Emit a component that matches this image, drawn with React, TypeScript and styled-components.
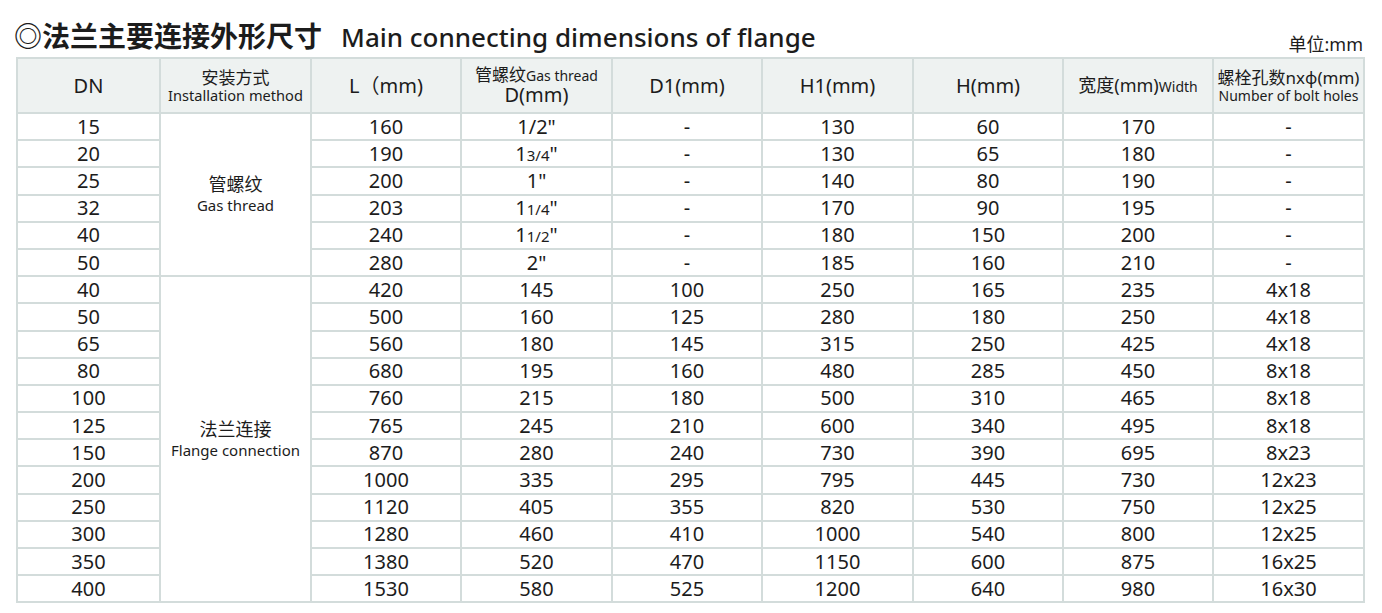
import React from 'react';
import styled, { createGlobalStyle } from 'styled-components';

const GlobalStyle = createGlobalStyle`
  html, body {
    margin: 0;
    padding: 0;
    background: #ffffff;
  }
  body {
    font-family: "Noto Sans", "Noto Sans CJK SC", sans-serif;
    color: #1c1c1c;
  }
`;

const Page = styled.div`
  width: 1382px;
  height: 613px;
  padding: 0 0 0 16px;
  box-sizing: border-box;
  overflow: hidden;
`;

const TitleBar = styled.div`
  width: 1347px;
  height: 57px;
  display: flex;
  align-items: flex-end;
  justify-content: space-between;
`;

const Title = styled.h1`
  margin: 0 0 7px -2px;
  display: flex;
  align-items: baseline;
  gap: 19px;
  line-height: 1;
  font-weight: 400;
`;

const TitleCn = styled.span`
  font-family: "Noto Sans CJK SC", sans-serif;
  font-size: 28px;
  font-weight: 700;
`;

const TitleEn = styled.span`
  font-family: "Noto Sans", sans-serif;
  font-size: 26px;
  font-weight: 500;
`;

const Unit = styled.span`
  font-family: "Noto Sans", "Noto Sans CJK SC", sans-serif;
  font-size: 18px;
  margin-bottom: 1px;
`;

const Table = styled.table`
  border-collapse: collapse;
  table-layout: fixed;
  width: 1347px;
  border: 2px solid #d3dcdb;
`;

const HeadCell = styled.th`
  background: #eef2f1;
  border: 2px solid #d3dcdb;
  height: 53px;
  padding: 0;
  font-weight: 400;
  text-align: center;
  vertical-align: middle;
  line-height: 1.1;
`;

const Cell = styled.td`
  border: 2px solid #d3dcdb;
  height: 25.2px;
  padding: 0;
  text-align: center;
  vertical-align: middle;
  font-size: 20px;
  line-height: 1;
`;

const Big = styled.span`
  font-size: 20px;
`;

const Cn = styled.span<{ $size?: number }>`
  font-family: "Noto Sans CJK SC", sans-serif;
  font-size: ${(p) => p.$size ?? 17}px;
`;

const Small = styled.span<{ $size?: number }>`
  display: block;
  font-size: ${(p) => p.$size ?? 14}px;
`;

const Inline = styled.span<{ $size?: number }>`
  font-size: ${(p) => p.$size ?? 14}px;
`;

const Frac = styled.span`
  font-size: 15px;
`;

const MethodCn = styled.div`
  font-family: "Noto Sans CJK SC", sans-serif;
  font-size: 18px;
  line-height: 1.2;
`;

const MethodEn = styled.div`
  font-size: 15px;
  line-height: 1.4;
`;

const widths = [143, 151, 150, 151, 150, 151, 150, 150, 151];

type Row = {
  dn: number;
  l: number;
  d: React.ReactNode;
  d1: string;
  h1: number;
  h: number;
  w: number;
  bolts: string;
};

const inch = (whole: string, frac?: string) => (
  <>
    {whole}
    {frac && <Frac>{frac}</Frac>}"
  </>
);

const rows: Row[] = [
  { dn: 15, l: 160, d: inch('1/2'), d1: '-', h1: 130, h: 60, w: 170, bolts: '-' },
  { dn: 20, l: 190, d: inch('1', '3/4'), d1: '-', h1: 130, h: 65, w: 180, bolts: '-' },
  { dn: 25, l: 200, d: inch('1'), d1: '-', h1: 140, h: 80, w: 190, bolts: '-' },
  { dn: 32, l: 203, d: inch('1', '1/4'), d1: '-', h1: 170, h: 90, w: 195, bolts: '-' },
  { dn: 40, l: 240, d: inch('1', '1/2'), d1: '-', h1: 180, h: 150, w: 200, bolts: '-' },
  { dn: 50, l: 280, d: inch('2'), d1: '-', h1: 185, h: 160, w: 210, bolts: '-' },
  { dn: 40, l: 420, d: 145, d1: '100', h1: 250, h: 165, w: 235, bolts: '4x18' },
  { dn: 50, l: 500, d: 160, d1: '125', h1: 280, h: 180, w: 250, bolts: '4x18' },
  { dn: 65, l: 560, d: 180, d1: '145', h1: 315, h: 250, w: 425, bolts: '4x18' },
  { dn: 80, l: 680, d: 195, d1: '160', h1: 480, h: 285, w: 450, bolts: '8x18' },
  { dn: 100, l: 760, d: 215, d1: '180', h1: 500, h: 310, w: 465, bolts: '8x18' },
  { dn: 125, l: 765, d: 245, d1: '210', h1: 600, h: 340, w: 495, bolts: '8x18' },
  { dn: 150, l: 870, d: 280, d1: '240', h1: 730, h: 390, w: 695, bolts: '8x23' },
  { dn: 200, l: 1000, d: 335, d1: '295', h1: 795, h: 445, w: 730, bolts: '12x23' },
  { dn: 250, l: 1120, d: 405, d1: '355', h1: 820, h: 530, w: 750, bolts: '12x25' },
  { dn: 300, l: 1280, d: 460, d1: '410', h1: 1000, h: 540, w: 800, bolts: '12x25' },
  { dn: 350, l: 1380, d: 520, d1: '470', h1: 1150, h: 600, w: 875, bolts: '16x25' },
  { dn: 400, l: 1530, d: 580, d1: '525', h1: 1200, h: 640, w: 980, bolts: '16x30' },
];

const methodCell = (i: number) => {
  if (i === 0)
    return (
      <Cell rowSpan={6}>
        <MethodCn>管螺纹</MethodCn>
        <MethodEn>Gas thread</MethodEn>
      </Cell>
    );
  if (i === 6)
    return (
      <Cell rowSpan={12}>
        <MethodCn>法兰连接</MethodCn>
        <MethodEn>Flange connection</MethodEn>
      </Cell>
    );
  return null;
};

export default function App() {
  return (
    <>
      <GlobalStyle />
      <Page>
        <TitleBar>
          <Title>
            <TitleCn>◎法兰主要连接外形尺寸</TitleCn>
            <TitleEn>Main connecting dimensions of flange</TitleEn>
          </Title>
          <Unit>
            <Cn $size={18}>单位</Cn>:mm
          </Unit>
        </TitleBar>
        <Table>
          <colgroup>
            {widths.map((w, i) => (
              <col key={i} style={{ width: w }} />
            ))}
          </colgroup>
          <thead>
            <tr>
              <HeadCell>
                <Big>DN</Big>
              </HeadCell>
              <HeadCell>
                <Cn $size={17}>安装方式</Cn>
                <Small $size={14.6}>Installation method</Small>
              </HeadCell>
              <HeadCell>
                <Big>
                  L<Cn $size={20}>（</Cn>mm)
                </Big>
              </HeadCell>
              <HeadCell>
                <Cn $size={17}>管螺纹</Cn>
                <Inline $size={14}>Gas thread</Inline>
                <Small $size={20}>D(mm)</Small>
              </HeadCell>
              <HeadCell>
                <Big>D1(mm)</Big>
              </HeadCell>
              <HeadCell>
                <Big>H1(mm)</Big>
              </HeadCell>
              <HeadCell>
                <Big>H(mm)</Big>
              </HeadCell>
              <HeadCell>
                <Cn $size={18}>宽度</Cn>
                <Inline $size={18}>(mm)</Inline>
                <Inline $size={14}>Width</Inline>
              </HeadCell>
              <HeadCell>
                <Cn $size={17}>螺栓孔数</Cn>
                <Inline $size={17}>nxφ(mm)</Inline>
                <Small $size={14}>Number of bolt holes</Small>
              </HeadCell>
            </tr>
          </thead>
          <tbody>
            {rows.map((r, i) => (
              <tr key={i}>
                <Cell>{r.dn}</Cell>
                {methodCell(i)}
                <Cell>{r.l}</Cell>
                <Cell>{r.d}</Cell>
                <Cell>{r.d1}</Cell>
                <Cell>{r.h1}</Cell>
                <Cell>{r.h}</Cell>
                <Cell>{r.w}</Cell>
                <Cell>{r.bolts}</Cell>
              </tr>
            ))}
          </tbody>
        </Table>
      </Page>
    </>
  );
}
